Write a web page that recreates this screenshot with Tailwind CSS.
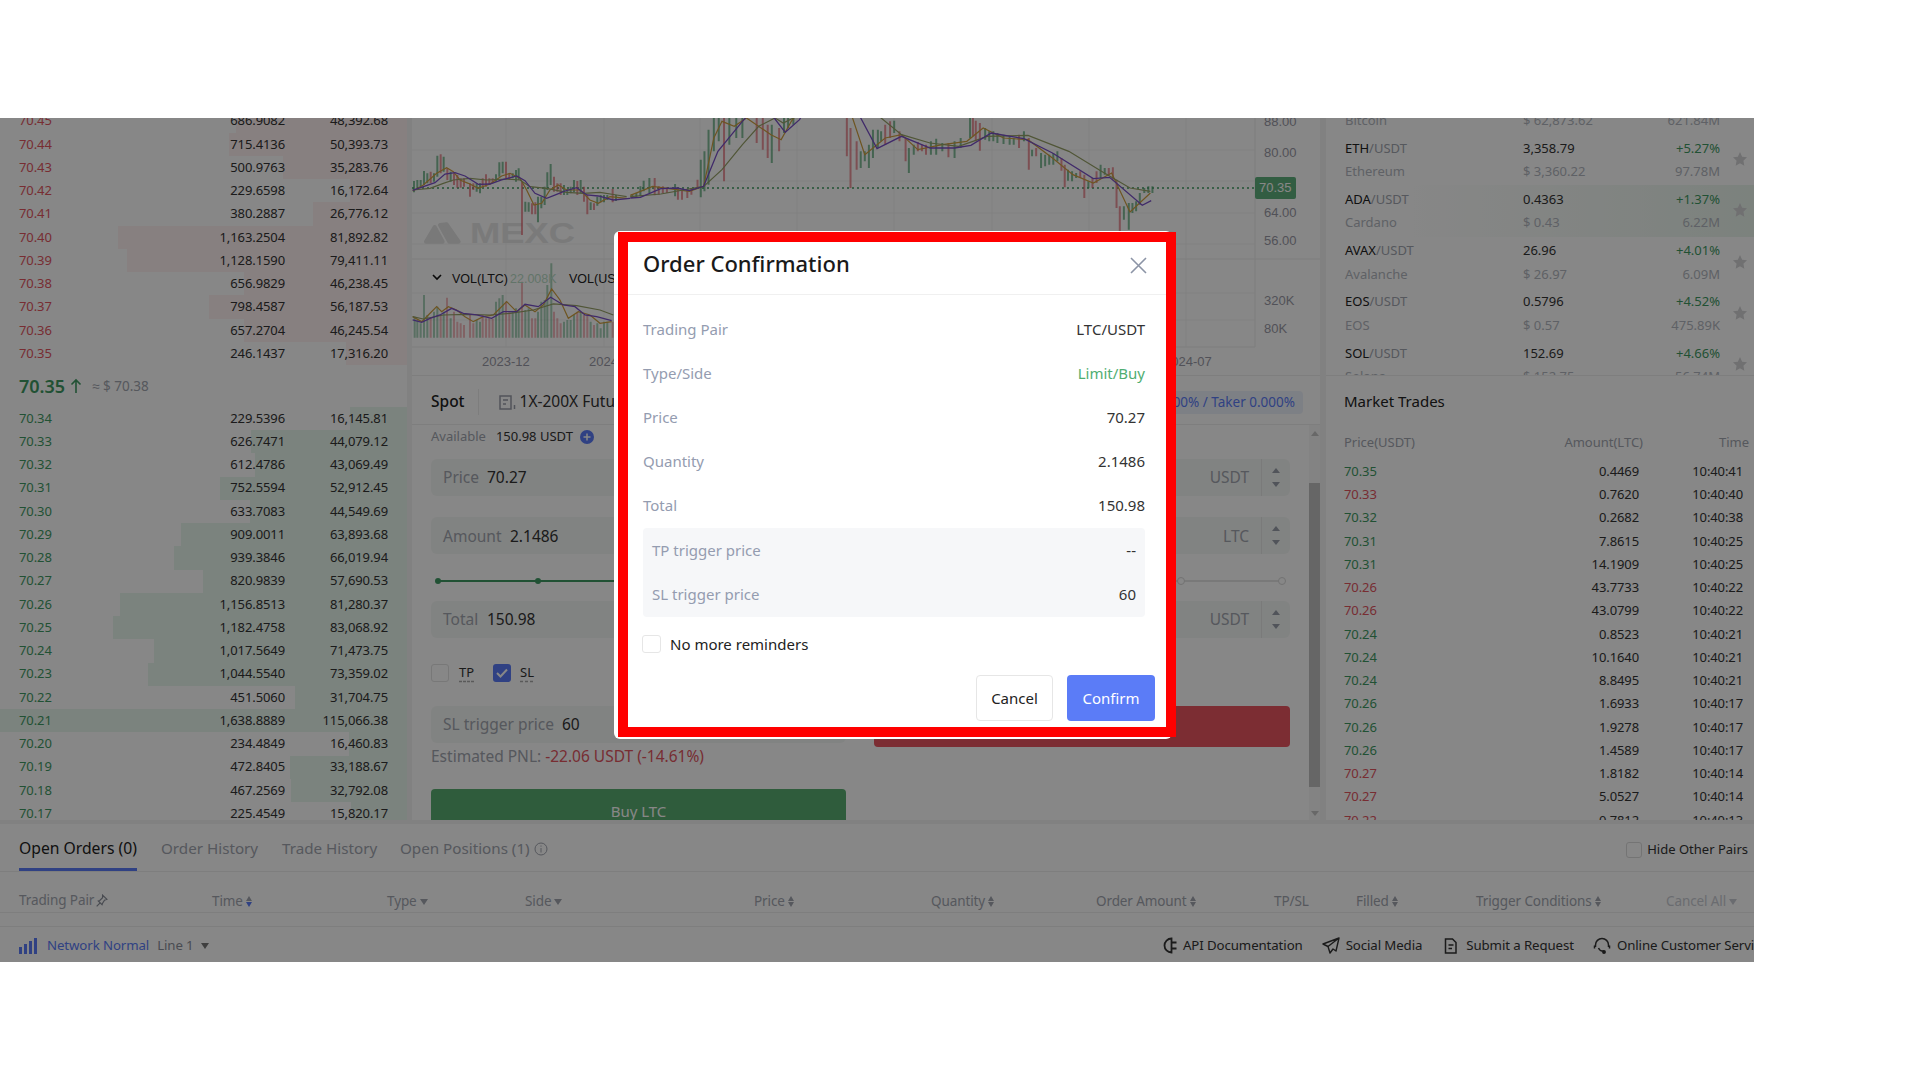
<!doctype html>
<html>
<head>
  <meta charset="UTF-8">
  <meta name="viewport" content="width=device-width, initial-scale=1.0">
  <script src="https://cdn.jsdelivr.net/npm/@tailwindcss/browser@4"></script>
</head>
<body class="bg-white font-['Noto_Sans',sans-serif] h-[1080px] overflow-hidden relative">

<!-- trading page -->
<div class="absolute left-0 top-[118px] w-[1754px] h-[844px] overflow-hidden bg-[#f4f4f4] flex flex-col">
  <div class="flex h-[702px] shrink-0">

    <!-- order book -->
    <div class="w-[407px] shrink-0 bg-white overflow-hidden text-[13px] tracking-[-0.1px] text-[#333]">
      <div id="asks" class="-mt-[8.6px]"></div>
      <div class="h-[41.7px] pl-[19px] flex items-center">
        <span class="text-[18px] font-semibold text-[#3f9a63] tracking-normal">70.35</span>
        <svg class="ml-[5px]" width="12" height="16" viewBox="0 0 12 16" fill="none" stroke="#3f9a63" stroke-width="1.6"><path d="M6 15V2M1.5 6.5L6 2l4.5 4.5"/></svg>
        <span class="ml-[10px] text-[#a2a6b0] text-[13.5px] tracking-normal">≈ $ 70.38</span>
      </div>
      <div id="bids"></div>
    </div>

    <!-- chart + order form -->
    <div class="w-[908px] ml-[5px] shrink-0 flex flex-col bg-white">
      <svg class="h-[257px] w-[908px] shrink-0" viewBox="412 118 908 257" font-family="Liberation Sans, sans-serif">
        <!-- grid -->
        <path d="M412 150H1255M412 181H1255M412 213H1255M412 244H1255M412 293H1255M412 320H1255M506 118V347M604 118V347M700 118V347M797 118V347M894 118V347M992 118V347M1089 118V347M1186 118V347" stroke="#f3f3f3" stroke-width="1"/>
        <path d="M412 259H1320M412 347H1255M1255 118V347" stroke="#ececec" stroke-width="1"/>
        <path d="M412 188H1255" stroke="#3f9a63" stroke-width="1.5" stroke-dasharray="2 3"/>
        <!-- watermark -->
        <g transform="translate(410,115) scale(.3333)" fill="#e4e4e4" stroke="#e4e4e4" stroke-width="12" stroke-linejoin="round">
          <path d="M48 380L74 336L98 380Z"/>
          <path d="M90 330L110 328L146 380L118 380Z"/>
        </g>
        <text x="470" y="243" font-size="29" font-weight="700" fill="#e6e6e6" textLength="105" lengthAdjust="spacingAndGlyphs">MEXC</text>
        <!-- candles left of the dialog -->
        <g transform="translate(410,115) scale(.3333)" fill="none">
          <path vector-effect="non-scaling-stroke" stroke-width="2" stroke="#3f9a63" stroke-opacity=".65" d="M12 198V232M22 195V220M32 195V215M42 168V210M52 175V205M72 175V200M82 122V185M101 125V170M122 170V200M200 205V230M210 205V235M258 178V200M268 142V185M278 140V175M308 175V190M318 165V200M326 160V195M346 260V290M356 262V290M384 245V322M394 245V280M404 215V270M412 172V225M422 147V210M462 210V240M472 222V240M482 215V235M492 195V232M512 195V235M542 262V285M562 245V272M572 240V262M582 240V262M592 240V255M618 240V258"/>
          <path vector-effect="non-scaling-stroke" stroke-width="2" stroke="#e0505c" stroke-opacity=".6" d="M62 170V205M92 118V175M112 160V195M132 175V210M142 180V218M152 190V218M162 190V215M180 205V245M190 205V225M218 190V215M228 178V215M238 190V210M248 190V205M288 140V190M298 175V195M336 200V360M366 265V298M376 262V298M432 185V230M442 205V230M452 205V240M502 198V240M522 215V260M532 240V298M552 265V285M608 222V262"/>
          <path vector-effect="non-scaling-stroke" stroke-width="1.2" stroke="#d0a040" d="M8 228L40 210L80 175L110 158L130 170L150 195L175 205L205 220L240 207L275 183L300 175L330 190L350 225L372 270L395 265L420 225L445 210L470 225L510 225L540 255L565 265L600 245L650 250"/>
          <path vector-effect="non-scaling-stroke" stroke-width="1.2" stroke="#98a268" d="M8 225L60 220L100 205L130 195L180 190L230 195L290 192L330 195L360 215L410 220L470 232L520 235L570 232L620 240L650 245"/>
          <path vector-effect="non-scaling-stroke" stroke-width="1.3" stroke="#7a50c8" d="M8 226L40 215L75 203L105 177L135 173L165 183L205 208L240 207L275 195L320 183L345 197L375 235L410 250L440 238L465 228L500 218L530 240L565 243L610 255L660 250"/>
          <!-- volume -->
          <path vector-effect="non-scaling-stroke" stroke-width="2" stroke="#3f9a63" stroke-opacity=".45" d="M14 668V605M22 668V615M32 668V625M42 668V540M52 668V600M72 668V590M82 668V575M101 668V590M122 668V610M200 668V615M210 668V620M258 668V560M268 668V550M278 668V540M308 668V590M318 668V580M326 668V585M346 668V585M356 668V580M384 668V590M394 668V560M404 668V555M412 668V510M424 668V445M462 668V620M472 668V615M482 668V615M492 668V600M512 668V590M542 668V620M562 668V625M572 668V640M582 668V620M592 668V620"/>
          <path vector-effect="non-scaling-stroke" stroke-width="2" stroke="#e0505c" stroke-opacity=".4" d="M62 668V610M92 668V600M111 668V548M132 668V590M142 668V620M152 668V625M162 668V630M180 668V600M190 668V625M218 668V600M228 668V610M238 668V610M248 668V612M288 668V560M298 668V590M336 668V500M366 668V610M376 668V610M432 668V590M442 668V610M452 668V625M502 668V590M522 668V600M532 668V600M552 668V630M608 668V620"/>
          <path vector-effect="non-scaling-stroke" stroke-width="1.2" stroke="#d0a040" d="M8 605L35 620L55 600L80 575L95 590L115 575L140 585L165 605L190 620L220 605L250 600L290 560L320 590L345 570L375 590L400 570L425 522L450 555L475 610L505 590L540 600L570 625L605 620"/>
          <path vector-effect="non-scaling-stroke" stroke-width="1.2" stroke="#98a268" d="M8 605L40 612L100 600L170 598L240 600L300 595L370 585L430 567L500 572L570 585L610 600"/>
          <path vector-effect="non-scaling-stroke" stroke-width="1.3" stroke="#7a50c8" d="M8 615L35 622L60 610L90 600L125 580L160 595L200 600L245 610L280 590L320 590L345 568L385 575L422 547L460 570L495 575L525 600L560 605L605 617"/>
        </g>
        <!-- candles above the dialog -->
        <g transform="translate(620,118) scale(.408,.3333)" fill="none">
          <path vector-effect="non-scaling-stroke" stroke-width="2" stroke="#3f9a63" stroke-opacity=".65" d="M30 228V240M40 225V238M50 205V235M58 188V220M72 180V225M135 198V235M198 125V238M207 100V220M217 35V200M230 0V100M242 0V70M268 0V80M285 0V60M300 0V60M372 20V135M402 0V45M412 0V30M425 0V20M590 100V150M600 100V130M610 80V150M620 35V120M632 35V90M640 40V70M672 8V45M708 90V165M720 80V110M762 70V110M775 62V110M790 75V100M820 70V120M835 60V90M858 0V60M895 30V65M905 40V70M915 40V70M925 45V75M940 50V78M955 55V80M965 60V80M990 40V70M1010 95V115M1032 105V150M1042 110V145M1052 110V140M1062 105V140M1072 100V130M1098 155V188M1108 160V190M1118 165V180M1148 190V210M1178 140V180M1188 150V170M1235 265V305M1247 255V335M1256 255V285M1265 250V280M1274 225V260M1285 210V225M1295 205V225M1305 205V225"/>
          <path vector-effect="non-scaling-stroke" stroke-width="2" stroke="#e0505c" stroke-opacity=".6" d="M85 180V232M95 205V230M105 205V225M115 208V225M142 210V245M152 215V245M165 215V240M175 210V230M190 185V210M255 0V190M335 0V75M350 0V95M362 20V120M390 30V100M556 0V115M565 30V210M580 70V155M650 20V80M662 10V60M685 40V70M700 60V130M730 72V100M740 80V100M750 80V110M805 75V118M865 0V55M872 8V70M882 15V98M978 50V90M1002 60V155M1020 90V115M1082 120V158M1090 140V208M1128 160V180M1138 170V240M1158 180V210M1168 160V195M1198 150V170M1208 148V185M1217 185V270M1225 265V340"/>
          <path vector-effect="non-scaling-stroke" stroke-width="1.2" stroke="#d0a040" d="M25 232L50 220L80 205L120 212L170 220L205 205L230 60L250 10L280 25L310 0L370 50L395 65L420 10L450 -40L540 -40L570 0L600 110L650 60L690 50L730 95L790 80L850 70L890 30L940 60L1000 65L1060 120L1110 170L1160 195L1205 165L1230 230L1250 282L1300 225"/>
          <path vector-effect="non-scaling-stroke" stroke-width="1.2" stroke="#98a268" d="M25 236L100 228L205 205L250 155L300 80L340 25L380 0L400 15L425 0L470 -40L600 -40L640 0L690 50L760 75L830 85L900 55L1000 52L1100 100L1180 160L1250 210L1300 220"/>
          <path vector-effect="non-scaling-stroke" stroke-width="1.3" stroke="#7a50c8" d="M25 240L50 238L100 212L140 210L170 218L205 205L240 100L300 10L330 -30L360 -30L378 0L405 43L440 5L470 -60L560 -60L590 0L630 92L690 55L760 90L820 90L860 82L910 45L990 62L1060 105L1160 182L1200 178L1280 262L1302 248"/>
        </g>
        <!-- axis labels -->
        <g font-size="13" fill="#9a9aa6">
          <text x="1264" y="126">88.00</text>
          <text x="1264" y="157">80.00</text>
          <text x="1264" y="217">64.00</text>
          <text x="1264" y="245">56.00</text>
          <text x="1264" y="305">320K</text>
          <text x="1264" y="333">80K</text>
          <text x="482" y="366">2023-12</text>
          <text x="589" y="366">2024-01</text>
          <text x="1164" y="366">2024-07</text>
        </g>
        <rect x="1255" y="177" width="41" height="22" rx="2" fill="#5fb07d"/>
        <text x="1259" y="192" font-size="13" fill="#fff">70.35</text>
        <!-- volume legend -->
        <path d="M433 275L437 279L441 275" fill="none" stroke="#111" stroke-width="1.6"/>
        <text x="452" y="283" font-size="12.5" fill="#222">VOL(LTC)</text>
        <text x="510" y="283" font-size="12.5" fill="#b9dcc6">22.008K</text>
        <text x="569" y="283" font-size="12.5" fill="#222">VOL(USDT)</text>
      </svg>

      <!-- order form -->
      <div class="h-[50px] shrink-0 border-y border-[#efefef] flex items-center pt-[4px] pl-[19px] pr-[17px] text-[15.5px]">
        <span class="font-medium text-[#222]">Spot</span>
        <span class="w-px h-[26px] bg-[#ededed] ml-[13px]"></span>
        <svg class="ml-[20px]" width="18" height="15" viewBox="0 0 18 15" fill="none" stroke="#9a9fab" stroke-width="1.5"><path d="M1 1h11v13H1zM4 5h5M4 9h3M15.5 10v4"/></svg>
        <span class="ml-[3px] text-[#333]">1X-200X Futures Trading</span>
        <span class="ml-auto h-[23px] px-[8px] rounded bg-[#edf1fb] text-[#5b7cf7] text-[13.5px] flex items-center">Maker 0.000% / Taker 0.000%</span>
      </div>

      <div class="flex flex-1 min-h-0">
        <div class="w-[897px] pl-[19px] pr-[19px] overflow-hidden">
          <div class="h-[24px] flex items-center text-[13px] text-[#333]">
            <span class="text-[#a2a6b0]">Available</span>
            <span class="ml-[10px]">150.98 USDT</span>
            <span class="ml-[7px] w-[14px] h-[14px] rounded-full bg-[#5b7cf7] flex items-center justify-center">
              <svg width="8" height="8" viewBox="0 0 8 8" stroke="#fff" stroke-width="1.5"><path d="M4 0.5v7M0.5 4h7"/></svg>
            </span>
          </div>

          <div class="mt-[10px] h-[37px] rounded-md bg-[#f4f7f5] flex items-center pl-[12px] text-[15.5px]">
            <span class="text-[#a2a6b0] w-[44px] pt-[1px]">Price</span><span class="text-[#333] pt-[1px]">70.27</span>
            <span class="ml-auto text-[#a2a6b0] pt-[1px]">USDT</span>
            <div class="ml-[12px] h-full w-[29px] border-l border-[#e6e6e6] flex flex-col items-center justify-center gap-[9px]">
              <span class="border-x-[4px] border-x-transparent border-b-[5px] border-b-[#9a9fab]"></span>
              <span class="border-x-[4px] border-x-transparent border-t-[5px] border-t-[#9a9fab]"></span>
            </div>
          </div>
          <div class="mt-[21px] h-[37px] rounded-md bg-[#f4f7f5] flex items-center pl-[12px] text-[15.5px]">
            <span class="text-[#a2a6b0] w-[67px] pt-[2px]">Amount</span><span class="text-[#333] pt-[2px]">2.1486</span>
            <span class="ml-auto text-[#a2a6b0] pt-[2px]">LTC</span>
            <div class="ml-[12px] h-full w-[29px] border-l border-[#e6e6e6] flex flex-col items-center justify-center gap-[9px]">
              <span class="border-x-[4px] border-x-transparent border-b-[5px] border-b-[#9a9fab]"></span>
              <span class="border-x-[4px] border-x-transparent border-t-[5px] border-t-[#9a9fab]"></span>
            </div>
          </div>

          <!-- slider -->
          <div class="relative h-[47px]">
            <div class="absolute left-[7px] right-[7px] top-[26px] h-[2px] bg-[#e4e4e4]"></div>
            <div class="absolute left-[7px] w-[300px] top-[26px] h-[2px] bg-[#3f9a63]"></div>
            <div class="absolute left-[4px] top-[24px] w-[6px] h-[6px] rounded-full bg-[#3f9a63]"></div>
            <div class="absolute left-[104px] top-[24px] w-[6px] h-[6px] rounded-full bg-[#3f9a63]"></div>
            <div class="absolute left-[746px] top-[23px] w-[8px] h-[8px] rounded-full bg-white border border-[#d8d8d8]"></div>
            <div class="absolute left-[847px] top-[23px] w-[8px] h-[8px] rounded-full bg-white border border-[#d8d8d8]"></div>
          </div>

          <div class="h-[37px] rounded-md bg-[#f4f7f5] flex items-center pl-[12px] text-[15.5px]">
            <span class="text-[#a2a6b0] w-[44px] pt-[1px]">Total</span><span class="text-[#333] pt-[1px]">150.98</span>
            <span class="ml-auto text-[#a2a6b0] pt-[1px]">USDT</span>
            <div class="ml-[12px] h-full w-[29px] border-l border-[#e6e6e6] flex flex-col items-center justify-center gap-[9px]">
              <span class="border-x-[4px] border-x-transparent border-b-[5px] border-b-[#9a9fab]"></span>
              <span class="border-x-[4px] border-x-transparent border-t-[5px] border-t-[#9a9fab]"></span>
            </div>
          </div>

          <div class="mt-[26px] h-[18px] flex items-center text-[13px] text-[#333]">
            <span class="w-[18px] h-[18px] rounded-[3px] border border-[#e2e2e2] bg-white"></span>
            <span class="ml-[10px] w-[34px] underline decoration-dashed decoration-[#aaa] underline-offset-4">TP</span>
            <span class="w-[18px] h-[18px] rounded-[3px] bg-[#5b7cf7] flex items-center justify-center">
              <svg width="12" height="10" viewBox="0 0 12 10" fill="none" stroke="#fff" stroke-width="2"><path d="M1 5l3.5 3.5L11 1.5"/></svg>
            </span>
            <span class="ml-[9px] underline decoration-dashed decoration-[#aaa] underline-offset-4">SL</span>
          </div>

          <div class="mt-[24px] flex justify-between">
            <div class="w-[415px]">
              <div class="h-[37px] rounded-md bg-[#f4f7f5] flex items-center pl-[12px] text-[15.5px]">
                <span class="text-[#a2a6b0] w-[119px] whitespace-nowrap">SL trigger price</span><span class="text-[#333]">60</span>
              </div>
              <div class="mt-[4px] h-[20px] flex items-center text-[15.5px] text-[#a2a6b0] whitespace-nowrap">Estimated PNL:&nbsp;<span class="text-[#e2565f]">-22.06 USDT (-14.61%)</span></div>
              <div class="mt-[22px] h-[44px] rounded bg-[#5aae71] text-white text-[15px] flex items-center justify-center">Buy LTC</div>
            </div>
            <div class="w-[416px] h-[41px] rounded bg-[#ea5560] text-white text-[15px] flex items-center justify-center">Sell LTC</div>
          </div>
        </div>

        <!-- scrollbar -->
        <div class="w-[11px] bg-[#f7f7f7] flex flex-col items-center pt-[6px]">
          <span class="border-x-[4px] border-x-transparent border-b-[5px] border-b-[#c4c4c4]"></span>
          <span class="mt-[47px] w-full h-[304px] bg-[#c1c1c1]"></span>
          <span class="mt-[24px] border-x-[4px] border-x-transparent border-t-[5px] border-t-[#c4c4c4]"></span>
        </div>
      </div>
    </div>

    <!-- markets + trades -->
    <div class="w-[428px] ml-[6px] shrink-0 flex flex-col text-[13px]">
      <div class="h-[257px] shrink-0 bg-white overflow-hidden">
        <div id="markets" class="-mt-[35px]"></div>
      </div>
      <div class="flex-1 min-h-0 bg-white border-t border-[#efefef] overflow-hidden pl-[18px]">
        <div class="h-[51px] flex items-center text-[15px] text-[#222]">Market Trades</div>
        <div class="h-[29px] flex items-center text-[#a2a6b0] mt-[1px]">
          <span class="w-[215px]">Price(USDT)</span>
          <span class="w-[84px] text-right">Amount(LTC)</span>
          <span class="w-[106px] text-right">Time</span>
        </div>
        <div id="trades" class="mt-[3px] tracking-[-0.1px]"></div>
      </div>
    </div>
  </div>

  <!-- open orders -->
  <div class="mt-[4px] h-[102px] shrink-0 bg-white text-[#a2a6b0]">
    <div class="h-[48px] border-b border-[#efefef] pl-[19px] flex items-center relative text-[15.2px] pt-[2px]">
      <span class="relative h-full flex items-center text-[#222] w-[118px] text-[15.7px] whitespace-nowrap">Open Orders (0)
        <span class="absolute left-0 right-0 bottom-[0px] h-[3px] bg-[#5b7cf7]"></span>
      </span>
      <span class="ml-[24px] w-[98px] whitespace-nowrap">Order History</span>
      <span class="ml-[23px] w-[95px] whitespace-nowrap">Trade History</span>
      <span class="ml-[23px] whitespace-nowrap">Open Positions (1)</span>
      <svg class="ml-[4px]" width="14" height="14" viewBox="0 0 14 14" fill="none" stroke="#a2a6b0" stroke-width="1"><circle cx="7" cy="7" r="6"/><path d="M7 6v4.5M7 3.5v1.2"/></svg>
      <span class="ml-auto mr-[6px] mt-[2px] flex items-center text-[13px] text-[#333]">
        <span class="w-[16px] h-[16px] rounded-[3px] border border-[#dcdcdc] mr-[5px]"></span>Hide Other Pairs
      </span>
    </div>
    <div class="h-[41px] pt-[19px] border-b border-[#efefef] pl-[19px] grid grid-cols-[193px_175px_138px_229px_177px_165px_178px_82px_120px_190px_auto] items-center text-[13.5px] tracking-[-0.1px]">
      <span class="flex items-center -mt-[2px]">Trading Pair
        <svg class="ml-[1px]" width="13" height="14" viewBox="0 0 12 13" fill="none" stroke="#8a8f9a" stroke-width="1.1"><path d="M7 1l4 4-2.2.8L7 8.6 6.5 10 3 6.5l1.4-.5L7 3.5zM4.5 8.5L1.5 11.5"/></svg>
      </span>
      <span class="flex items-center">Time
        <span class="ml-[3px] flex flex-col gap-[1px]"><span class="border-x-[3.5px] border-x-transparent border-b-[5px] border-b-[#a2a6b0]"></span><span class="border-x-[3.5px] border-x-transparent border-t-[5px] border-t-[#5b7cf7]"></span></span>
      </span>
      <span class="flex items-center">Type<span class="ml-[3px] border-x-[4px] border-x-transparent border-t-[6px] border-t-[#a2a6b0]"></span></span>
      <span class="flex items-center">Side<span class="ml-[3px] border-x-[4px] border-x-transparent border-t-[6px] border-t-[#a2a6b0]"></span></span>
      <span class="flex items-center">Price
        <span class="ml-[3px] flex flex-col gap-[1px]"><span class="border-x-[3.5px] border-x-transparent border-b-[5px] border-b-[#a2a6b0]"></span><span class="border-x-[3.5px] border-x-transparent border-t-[5px] border-t-[#a2a6b0]"></span></span>
      </span>
      <span class="flex items-center">Quantity
        <span class="ml-[3px] flex flex-col gap-[1px]"><span class="border-x-[3.5px] border-x-transparent border-b-[5px] border-b-[#a2a6b0]"></span><span class="border-x-[3.5px] border-x-transparent border-t-[5px] border-t-[#a2a6b0]"></span></span>
      </span>
      <span class="flex items-center">Order Amount
        <span class="ml-[3px] flex flex-col gap-[1px]"><span class="border-x-[3.5px] border-x-transparent border-b-[5px] border-b-[#a2a6b0]"></span><span class="border-x-[3.5px] border-x-transparent border-t-[5px] border-t-[#a2a6b0]"></span></span>
      </span>
      <span>TP/SL</span>
      <span class="flex items-center">Filled
        <span class="ml-[3px] flex flex-col gap-[1px]"><span class="border-x-[3.5px] border-x-transparent border-b-[5px] border-b-[#a2a6b0]"></span><span class="border-x-[3.5px] border-x-transparent border-t-[5px] border-t-[#a2a6b0]"></span></span>
      </span>
      <span class="flex items-center whitespace-nowrap">Trigger Conditions
        <span class="ml-[3px] flex flex-col gap-[1px]"><span class="border-x-[3.5px] border-x-transparent border-b-[5px] border-b-[#a2a6b0]"></span><span class="border-x-[3.5px] border-x-transparent border-t-[5px] border-t-[#a2a6b0]"></span></span>
      </span>
      <span class="flex items-center whitespace-nowrap text-[#c9ccd3]">Cancel All<span class="ml-[3px] border-x-[4px] border-x-transparent border-t-[6px] border-t-[#c9ccd3]"></span></span>
    </div>
  </div>

  <!-- footer -->
  <div class="flex-1 bg-white border-t border-[#efefef] flex items-center pt-[2px] text-[13.25px] text-[#333] tracking-[-0.1px] whitespace-nowrap">
    <div class="w-[1160px] shrink-0 pl-[19px] flex items-center">
      <svg width="19" height="16" viewBox="0 0 19 16" fill="#5b7cf7"><path d="M0 9h3v7H0zM5 6h3v10H5zM10 3h3v13h-3zM15 0h3v16h-3z"/></svg>
      <span class="ml-[9px] text-[#5b7cf7]">Network Normal</span>
      <span class="ml-[8px] text-[#8a8f9a]">Line 1</span>
      <span class="ml-[7px] border-x-[4px] border-x-transparent border-t-[6px] border-t-[#777]"></span>
    </div>
    <svg class="shrink-0" width="18" height="17" viewBox="0 0 18 17" fill="none" stroke="#333" stroke-width="1.8"><path d="M11.5 1.5A7 7 0 1 0 11.5 15.5ZM11.5 5.5h5M11.5 11.5h5"/></svg>
    <span class="ml-[5px] shrink-0">API Documentation</span>
    <svg class="ml-[19px] shrink-0" width="18" height="17" viewBox="0 0 18 17" fill="none" stroke="#333" stroke-width="1.4" stroke-linejoin="round"><path d="M17 1L1 7l5 2.5L8 16l3-4 3 2zM6 9.5L17 1"/></svg>
    <span class="ml-[6px] shrink-0">Social Media</span>
    <svg class="ml-[22px] shrink-0" width="13" height="16" viewBox="0 0 13 16" fill="none" stroke="#333" stroke-width="1.5"><path d="M1.5 1h7L12 4.5V15H1.5zM4.5 7h5M4.5 10.5h3.5"/></svg>
    <span class="ml-[9px] shrink-0">Submit a Request</span>
    <svg class="ml-[19px] shrink-0" width="18" height="18" viewBox="0 0 18 18" fill="none" stroke="#333" stroke-width="1.5"><path d="M2.5 10V8a6.5 6.5 0 0 1 13 0v2M1.5 8.5v3M16.5 8.5v3M5.5 11c1 2 2.5 3 3.5 3h2"/><circle cx="11" cy="15" r="1.2" fill="#333"/></svg>
    <span class="ml-[6px] shrink-0">Online Customer Service</span>
  </div>
</div>

<!-- backdrop -->
<div class="absolute left-0 top-[118px] w-[1754px] h-[844px] bg-black/47"></div>

<!-- dialog -->
<div class="absolute left-[614px] top-[231px] w-[558px] h-[508px] bg-white rounded-[6px]">
  <div class="h-[64px] border-b border-[#f0f0f0] pl-[29px] pr-[25px] flex items-center justify-between">
    <span class="mt-[2px] text-[22px] font-medium text-[#1a1a1a]">Order Confirmation</span>
    <svg class="mt-[5px]" width="17" height="17" viewBox="0 0 17 17" fill="none" stroke="#8c94a6" stroke-width="1.6"><path d="M1 1l15 15M16 1L1 16"/></svg>
  </div>
  <div class="pl-[29px] pr-[27px] pt-[12px] text-[15px] text-[#333]">
    <div class="h-[44px] flex items-center justify-between"><span class="text-[#949cb0]">Trading Pair</span><span>LTC/USDT</span></div>
    <div class="h-[44px] flex items-center justify-between"><span class="text-[#949cb0]">Type/Side</span><span class="text-[#4fae72]">Limit/Buy</span></div>
    <div class="h-[44px] flex items-center justify-between"><span class="text-[#949cb0]">Price</span><span>70.27</span></div>
    <div class="h-[44px] flex items-center justify-between"><span class="text-[#949cb0]">Quantity</span><span>2.1486</span></div>
    <div class="h-[45px] pb-[1px] flex items-center justify-between"><span class="text-[#949cb0]">Total</span><span>150.98</span></div>
    <div class="h-[89px] rounded bg-[#f6f7f9] px-[9px] flex flex-col justify-center">
      <div class="h-[44px] flex items-center justify-between"><span class="text-[#949cb0]">TP trigger price</span><span>--</span></div>
      <div class="h-[44px] flex items-center justify-between"><span class="text-[#949cb0]">SL trigger price</span><span>60</span></div>
    </div>
    <div class="mt-[18px] -ml-[1px] h-[18px] flex items-center">
      <span class="w-[19px] h-[18px] rounded-[3px] border border-[#e6e6e6] bg-white"></span>
      <span class="ml-[9px] text-[#222]">No more reminders</span>
    </div>
  </div>
  <div class="mt-[22px] pr-[17px] flex justify-end gap-[14px] text-[15px]">
    <button type="button" class="w-[77px] h-[46px] rounded border border-[#e6e6e6] bg-white text-[#222]">Cancel</button>
    <button type="button" class="w-[88px] h-[46px] rounded bg-[#5b7cf7] text-white">Confirm</button>
  </div>
</div>

<!-- red highlight frame -->
<div class="absolute left-[618px] top-[232px] w-[558px] h-[505px] border-[10px] border-[#ff0000] pointer-events-none"></div>

<script>
    const asks = [
        ["70.45","686.9082","48,392.68"],["70.44","715.4136","50,393.73"],["70.43","500.9763","35,283.76"],
        ["70.42","229.6598","16,172.64"],["70.41","380.2887","26,776.12"],["70.40","1,163.2504","81,892.82"],
        ["70.39","1,128.1590","79,411.11"],["70.38","656.9829","46,238.45"],["70.37","798.4587","56,187.53"],
        ["70.36","657.2704","46,245.54"],["70.35","246.1437","17,316.20"]
    ];
    const bids = [
        ["70.34","229.5396","16,145.81"],["70.33","626.7471","44,079.12"],["70.32","612.4786","43,069.49"],
        ["70.31","752.5594","52,912.45"],["70.30","633.7083","44,549.69"],["70.29","909.0011","63,893.68"],
        ["70.28","939.3846","66,019.94"],["70.27","820.9839","57,690.53"],["70.26","1,156.8513","81,280.37"],
        ["70.25","1,182.4758","83,068.92"],["70.24","1,017.5649","71,473.75"],["70.23","1,044.5540","73,359.02"],
        ["70.22","451.5060","31,704.75"],["70.21","1,638.8889","115,066.38"],["70.20","234.4849","16,460.83"],
        ["70.19","472.8405","33,188.67"],["70.18","467.2569","32,792.08"],["70.17","225.4549","15,820.17"]
    ];
    const maxAmount = 1638.8889;

    let bookRows = (rows, isAsk) => {
        let htx = '';
        for (let row of rows) {
            let pct = parseFloat(row[1].replace(',', '')) / maxAmount * 100;
            htx += `
                <div class="relative h-[23.26px] flex items-center">
                    <div class="absolute right-0 top-0 bottom-0 ${isAsk ? 'bg-[#fff2f2]' : 'bg-[#e9f7ee]'}" style="width:${pct}%"></div>
                    <div class="relative w-[285px] pl-[19px] flex justify-between">
                        <span class="${isAsk ? 'text-[#e2565f]' : 'text-[#3f9a63]'}">${row[0]}</span><span>${row[1]}</span>
                    </div>
                    <div class="relative w-[103px] text-right">${row[2]}</div>
                </div>`;
        }
        return htx;
    };
    document.getElementById("asks").innerHTML = bookRows(asks, true);
    document.getElementById("bids").innerHTML = bookRows(bids, false);

    const markets = [
        ["BTC","Bitcoin","62,873.15","$ 62,873.62","+2.68%","621.84M"],
        ["ETH","Ethereum","3,358.79","$ 3,360.22","+5.27%","97.78M"],
        ["ADA","Cardano","0.4363","$ 0.43","+1.37%","6.22M"],
        ["AVAX","Avalanche","26.96","$ 26.97","+4.01%","6.09M"],
        ["EOS","EOS","0.5796","$ 0.57","+4.52%","475.89K"],
        ["SOL","Solana","152.69","$ 152.75","+4.66%","56.74M"]
    ];
    let htx = '';
    for (let m of markets) {
        htx += `
            <div class="relative h-[51.2px] pl-[19px] pt-[1px] flex items-center ${m[0] === 'ADA' ? 'bg-linear-to-r from-white from-20% to-[#eaf5ed]' : ''}">
                <div class="w-[178px] leading-[23.4px]">
                    <div class="text-[#222]">${m[0]}<span class="text-[#a2a6b0]">/USDT</span></div>
                    <div class="text-[#b3b7c0]">${m[1]}</div>
                </div>
                <div class="w-[110px] leading-[23.4px]">
                    <div class="text-[#333]">${m[2]}</div>
                    <div class="text-[#b3b7c0]">${m[3]}</div>
                </div>
                <div class="w-[87px] leading-[23.4px] text-right">
                    <div class="text-[#3f9a63]">${m[4]}</div>
                    <div class="text-[#b3b7c0]">${m[5]}</div>
                </div>
                <svg class="ml-[12px] -mt-[2px]" width="16" height="16" viewBox="0 0 24 24" fill="#d3d3d6"><path d="M12 1.5l3.2 7 7.3.9-5.4 5.1 1.4 7.5L12 18.3l-6.5 3.7 1.4-7.5L1.5 9.4l7.3-.9z"/></svg>
            </div>`;
    }
    document.getElementById("markets").innerHTML = htx;

    const trades = [
        ["70.35","0.4469","10:40:41",1],["70.33","0.7620","10:40:40",0],["70.32","0.2682","10:40:38",1],
        ["70.31","7.8615","10:40:25",1],["70.31","14.1909","10:40:25",1],["70.26","43.7733","10:40:22",0],
        ["70.26","43.0799","10:40:22",0],["70.24","0.8523","10:40:21",1],["70.24","10.1640","10:40:21",1],
        ["70.24","8.8495","10:40:21",1],["70.26","1.6933","10:40:17",1],["70.26","1.9278","10:40:17",1],
        ["70.26","1.4589","10:40:17",1],["70.27","1.8182","10:40:14",0],["70.27","5.0527","10:40:14",0],
        ["70.22","0.7812","10:40:13",0]
    ];
    htx = '';
    for (let t of trades) {
        htx += `
            <div class="h-[23.25px] flex items-center text-[#333]">
                <span class="w-[215px] ${t[3] ? 'text-[#3f9a63]' : 'text-[#e2565f]'}">${t[0]}</span>
                <span class="w-[80px] text-right">${t[1]}</span>
                <span class="w-[104px] text-right">${t[2]}</span>
            </div>`;
    }
    document.getElementById("trades").innerHTML = htx;
</script>
</body>
</html>
